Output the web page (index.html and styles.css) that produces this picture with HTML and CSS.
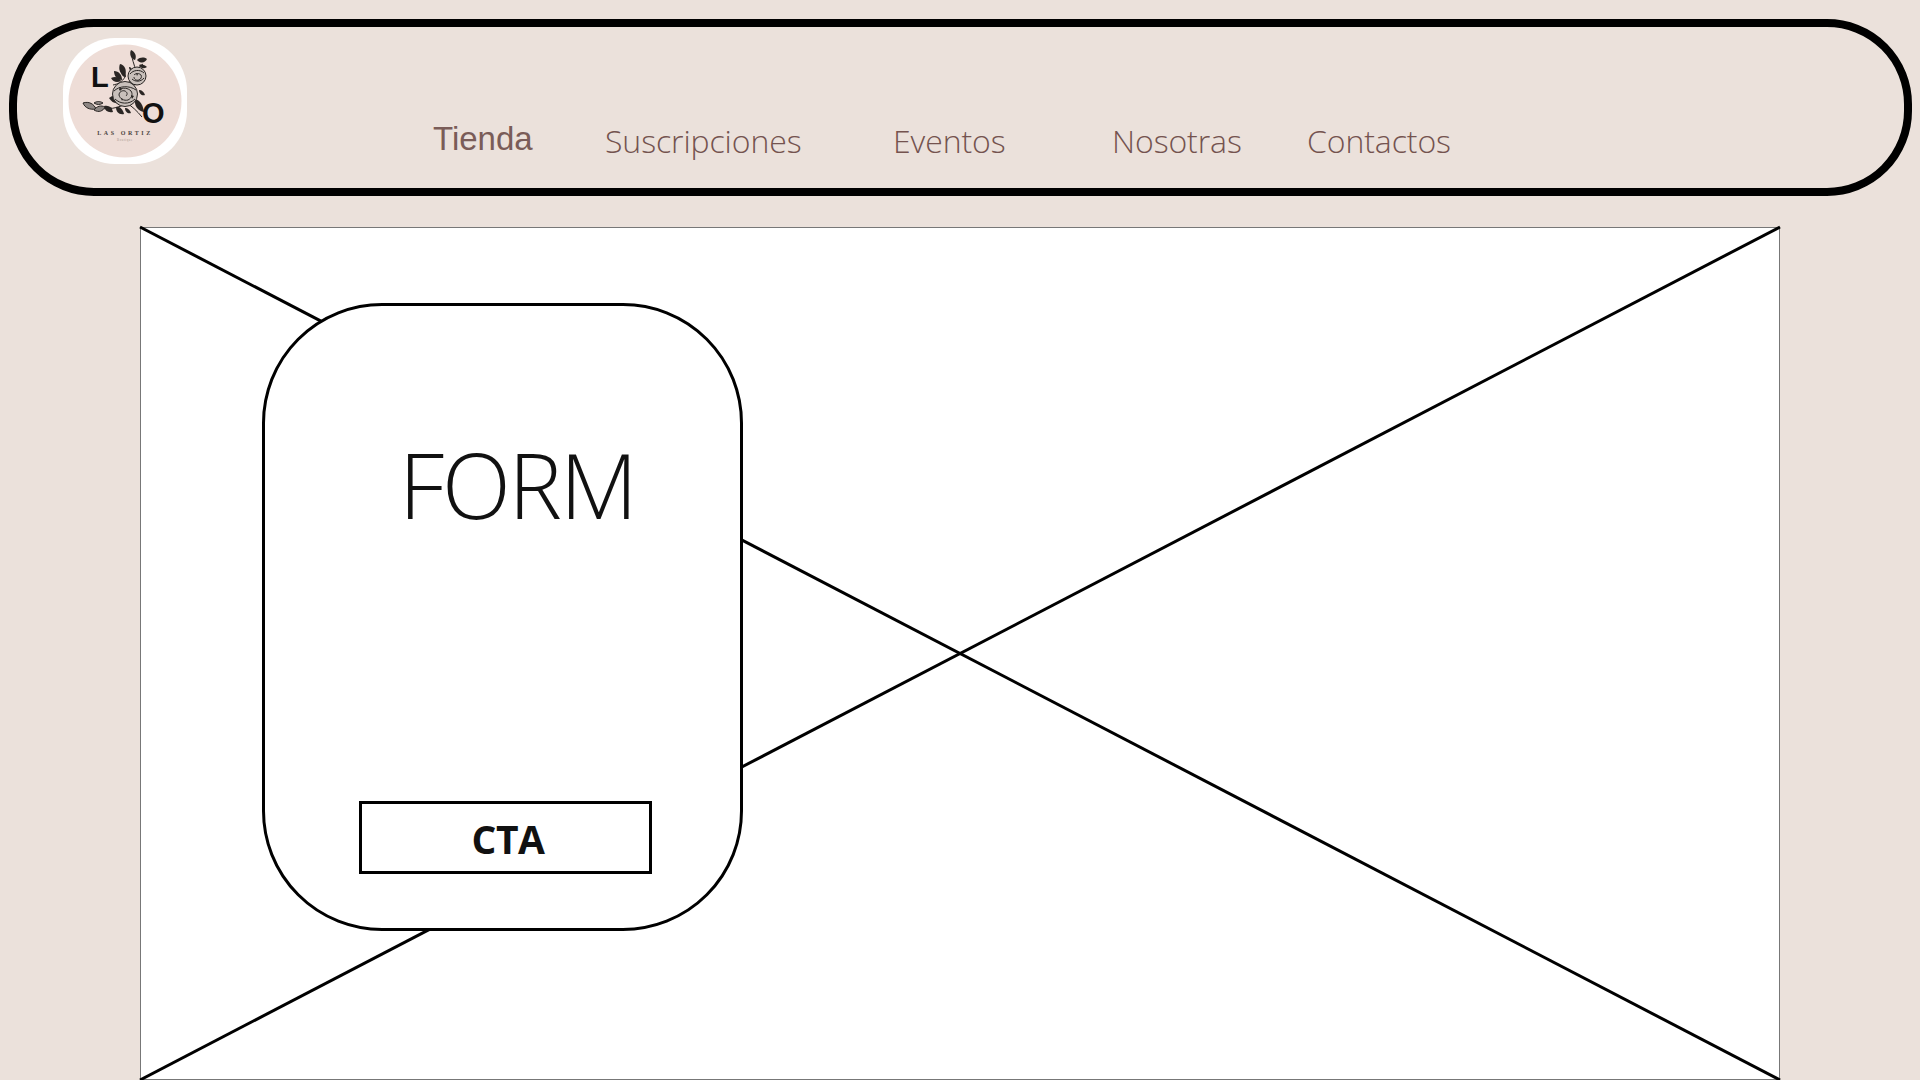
FILE: index.html
```html
<!DOCTYPE html>
<html lang="es">
  <head>
    <meta charset="utf-8" />
    <meta name="viewport" content="width=device-width, initial-scale=1.0" />
    <link rel="stylesheet" href="styles.css">
    <title>Las Ortiz</title>
  </head>

  <body>
    <header class="navbar">
      <div class="logo">
        <svg class="logo-mark" viewBox="0 0 124 126" aria-label="Las Ortiz">
          <circle class="logo-disc" cx="62" cy="63" r="56.5" />
          <g class="flower-lines">
            <path d="M69 14c-1 10 5 14 3 24c-2 9-9 13-10 24" />
            <path d="M62 66c-10 6-24 6-38 2" />
            <path d="M62 64c7 4 12 9 17 15" />
            <path d="M50 47c5-1 9-3 12-8M58 29c3 2 4 4 4 9M80 26c-3 2-5 4-6 8" />
          </g>
          <g class="flower-petals">
            <path d="M68 12c4 2 6 6 4 10c-4-1-6-6-4-10z" />
            <path d="M74 22c3-3 7-3 10-1c-2 4-6 5-10 1z" />
            <path d="M76 27c3-1 6 0 8 2c-3 2-6 2-8-2z" />
            <path d="M57 26c5 1 7 6 5 12c-5-2-7-7-5-12z" />
            <path d="M51 33c5 0 8 4 8 9c-5 0-8-4-8-9z" />
            <path d="M48 40c4-2 8-1 10 3c-4 2-8 1-10-3z" />
            <path d="M46 60c5-4 10-3 13 2c-4 5-9 4-13-2z" />
            <path d="M72 61c5 1 8 6 9 13c-6-1-10-6-9-13z" />
            <path d="M76 52c3 0 5 2 6 5c-3 1-6-1-6-5z" />
            <path d="M53 69c4-1 7 3 8 7c-5 1-8-2-8-7z" />
            <path d="M62 70c3 0 5 2 6 5c-3 1-6-1-6-5z" />
            <path d="M41 68c5-1 8 1 9 6c-5 1-8-1-9-6z" />
            <path d="M65 44c3-2 7-1 10 2c-4 2-7 2-10-2z" />
            <path d="M52 49c3-2 6-3 9-2c-2 4-5 5-9 2z" />
            <path d="M58 33c3 1 5 3 5 6c-3 0-5-2-5-6zM66 29c2 0 3 2 3 4c-2 0-3-2-3-4z" />
          </g>
          <g class="flower-roses">
            <circle class="rose-base" cx="74" cy="38" r="9" />
            <path d="M67 36c3-4 10-5 14-1M69 41c3 3 9 3 12-1M71 37c2-2 5-2 7 0c1 2 0 4-2 5c-3 1-5-1-5-3" />
            <circle class="rose-base" cx="62" cy="56" r="12.5" />
            <path d="M51 53c5-5 15-6 22-1M52 61c5 5 14 6 20 0M56 52c4-3 9-2 12 1c2 3 1 7-3 9c-4 1-8-1-9-5c0-3 3-5 6-4c2 1 3 3 1 5" />
          </g>
          <g class="flower-dots">
            <path d="M56 49l3 2l-2 2zM68 57l3 1l-2 3zM58 60l2 1l-1 2zM73 35l2 1l-1 2z" />
          </g>
          <g class="flower-sprig">
            <path d="M20 65c6-2 11 1 13 6c-6 1-11-1-13-6z" />
            <path d="M31 72c3-4 7-5 11-3c-2 4-6 6-11 3z" />
            <path d="M31 65c3-2 6-2 9 0c-3 2-6 2-9 0z" />
          </g>
          <text class="logo-letter" x="28" y="49">L</text>
          <text class="logo-letter" x="79" y="85">O</text>
          <text class="logo-name" x="62" y="97">LAS ORTIZ</text>
          <text class="logo-sub" x="62" y="103">Boutique</text>
        </svg>
      </div>
      <nav class="menu">
        <a class="menu-link menu-link--current" href="#">Tienda</a>
        <a class="menu-link" href="#">Suscripciones</a>
        <a class="menu-link" href="#">Eventos</a>
        <a class="menu-link" href="#">Nosotras</a>
        <a class="menu-link" href="#">Contactos</a>
      </nav>
    </header>

    <main class="hero">
      <svg class="hero-cross" viewBox="0 0 1640 853" preserveAspectRatio="none">
        <line x1="0" y1="0" x2="1640" y2="853" />
        <line x1="1640" y1="0" x2="0" y2="853" />
      </svg>
      <form class="signup">
        <h1 class="signup-title">FORM</h1>
        <button class="signup-cta" type="button">CTA</button>
      </form>
    </main>
  </body>
</html>
```

FILE: styles.css
```css
html,
body {
  height: 1080px;
  overflow: hidden;
}

body {
  background-color: #ebe1db;
  margin: 0;
  font-family: "Open Sans", "Liberation Sans", sans-serif;
}

.navbar {
  display: flex;
  height: 177px;
  margin: 19px 8px 0 9px;
  border: 8px solid #000;
  border-radius: 85px;
  box-sizing: border-box;
}

.logo {
  width: 124px;
  height: 126px;
  margin: 11px 0 0 46px;
  background: #fff;
  border-radius: 42%;
  flex: none;
}

.logo-mark {
  display: block;
  width: 124px;
  height: 126px;
}

.logo-disc {
  fill: #eeddd7;
}

.flower-lines,
.flower-roses,
.flower-sprig {
  fill: none;
  stroke: #2a2624;
  stroke-width: 1;
}

.rose-base {
  fill: #c9c0bb;
}

.flower-petals,
.flower-dots {
  fill: #2a2624;
}

.flower-sprig {
  fill: #8d8683;
}

.logo-letter {
  fill: #111;
  font-family: "Liberation Sans", sans-serif;
  font-size: 29px;
  font-weight: 700;
}

.logo-name {
  fill: #4a4340;
  font-family: "Liberation Serif", serif;
  font-size: 6px;
  font-weight: 700;
  letter-spacing: 2.6px;
  text-anchor: middle;
}

.logo-sub {
  fill: #a8978f;
  font-family: "Liberation Serif", serif;
  font-size: 3px;
  letter-spacing: 0.6px;
  text-anchor: middle;
}

.menu {
  display: grid;
  grid-template-columns: 172px 288px 219px 195px auto;
  margin-left: 246px;
  padding-top: 92px;
}

.menu-link {
  color: #74534f;
  font-size: 32px;
  font-weight: 300;
  line-height: 44px;
  letter-spacing: -0.1px;
  text-decoration: none;
}

.menu-link--current {
  color: #7a5c58;
  font-family: "Liberation Sans", sans-serif;
  font-size: 33px;
  letter-spacing: 0;
  margin-top: -2px;
}

.hero {
  position: relative;
  width: 1640px;
  height: 853px;
  margin: 31px auto 0;
  background: #fff;
  border: 1px solid #777;
  box-sizing: border-box;
}

.hero-cross {
  position: absolute;
  top: -1px;
  left: -1px;
  width: 1640px;
  height: 853px;
  overflow: visible;
}

.hero-cross line {
  stroke: #000;
  stroke-width: 3;
}

.signup {
  position: absolute;
  top: 75px;
  left: 121px;
  display: flex;
  flex-direction: column;
  width: 481px;
  height: 628px;
  background: #fff;
  border: 3px solid #000;
  border-radius: 120px;
  box-sizing: border-box;
}

.signup-title {
  margin: 120px 0 0 134px;
  color: #111;
  font-size: 90px;
  font-weight: 300;
  line-height: 116px;
  letter-spacing: -2.2px;
}

.signup-cta {
  width: 293px;
  height: 73px;
  margin: auto 0 54px 94px;
  padding: 2px 0 0 5px;
  background: #fff;
  border: 3px solid #000;
  color: #111;
  font-family: "Open Sans", sans-serif;
  font-size: 39px;
  font-weight: 700;
  letter-spacing: -0.5px;
}
```
